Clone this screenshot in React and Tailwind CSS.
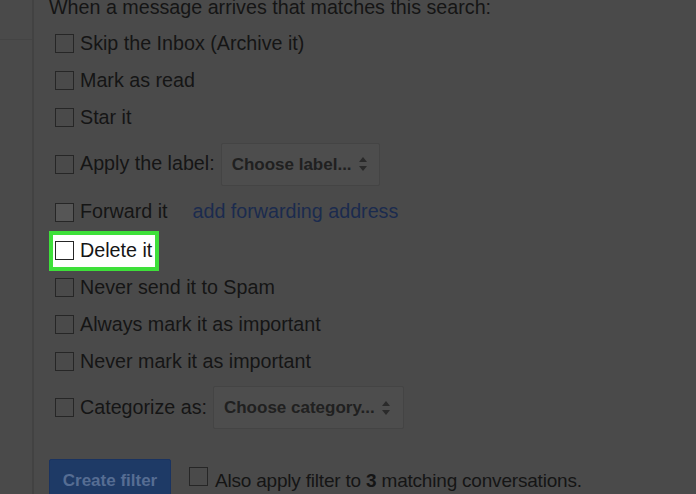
import React from 'react';

const Box = ({ className = '' }) => (
  <span className={`inline-block w-[19px] h-[19px] shrink-0 border border-[#262626] ${className}`} />
);

const Arrows = () => (
  <svg width="10" height="16" viewBox="0 0 10 16" className="ml-[6px]">
    <path d="M5 1 L9 6 H1 Z" fill="#2a2a2a" />
    <path d="M5 15 L9 10 H1 Z" fill="#2a2a2a" />
  </svg>
);

const Row = ({ children, className = 'h-[37px]' }) => (
  <div className={`flex items-center ${className}`}>{children}</div>
);

export default function App() {
  return (
    <div
      className="w-[696px] h-[494px] overflow-hidden bg-[#4a4a4a] flex text-[#151515]"
      style={{ fontFamily: '"Liberation Sans", Arial, sans-serif' }}
    >
      {/* Left rail */}
      <div className="w-[34px] shrink-0 border-r-2 border-[#424242] flex flex-col">
        <div className="h-[40px] border-b border-[#444]" />
      </div>

      {/* Filter options */}
      <div className="flex-1 pl-[15px] text-[19.7px] leading-none">
        <div className="-mt-[2px] h-[27px]">When a message arrives that matches this search:</div>

        <div className="pl-[6px]">
          <Row><Box /><span className="ml-[6px]">Skip the Inbox (Archive it)</span></Row>
          <Row><Box /><span className="ml-[6px]">Mark as read</span></Row>
          <Row><Box /><span className="ml-[6px]">Star it</span></Row>

          <Row className="h-[56px]">
            <Box />
            <span className="ml-[6px]">Apply the label:</span>
            <div className="ml-[6px] h-[43px] w-[159px] border border-[#444] bg-[#4d4d4d] rounded-[2px] flex items-center pl-[10px] text-[17px] font-bold text-[#202020]">
              Choose label...
              <Arrows />
            </div>
          </Row>

          <Row className="h-[40px]">
            <Box className="bg-[#565656] border-[#5a5a5a]" />
            <span className="ml-[6px]">Forward it</span>
            <span className="ml-[25px] text-[#1b2b4e]">add forwarding address</span>
          </Row>

          <div className="h-[37px] flex items-center">
            <div className="-ml-[6px] h-[40px] border-4 border-[#3ee03a] bg-white flex items-center pl-[2px] pr-[3px]">
              <Box className="bg-white border-[#444]" />
              <span className="ml-[6px]">Delete it</span>
            </div>
          </div>

          <Row><Box /><span className="ml-[6px]">Never send it to Spam</span></Row>
          <Row><Box /><span className="ml-[6px]">Always mark it as important</span></Row>
          <Row><Box /><span className="ml-[6px]">Never mark it as important</span></Row>

          <Row className="h-[55px]">
            <Box />
            <span className="ml-[6px]">Categorize as:</span>
            <div className="ml-[6px] h-[43px] w-[191px] border border-[#444] bg-[#4d4d4d] rounded-[2px] flex items-center pl-[10px] text-[17px] font-bold text-[#202020]">
              Choose category...
              <Arrows />
            </div>
          </Row>
        </div>

        <div className="mt-[24px] flex items-start">
          <div className="w-[122px] h-[42px] bg-[#1e3a66] border border-[#1a3360] rounded-[2px] flex items-center justify-center text-[17px] font-bold text-[#566d93]">
            Create filter
          </div>
          <div className="ml-[18px] mt-[4px] flex items-center">
            <Box />
            <span className="ml-[7px] mt-[8px] text-[19px] tracking-[-0.2px]">
              Also apply filter to <b>3</b> matching conversations.
            </span>
          </div>
        </div>
      </div>
    </div>
  );
}
